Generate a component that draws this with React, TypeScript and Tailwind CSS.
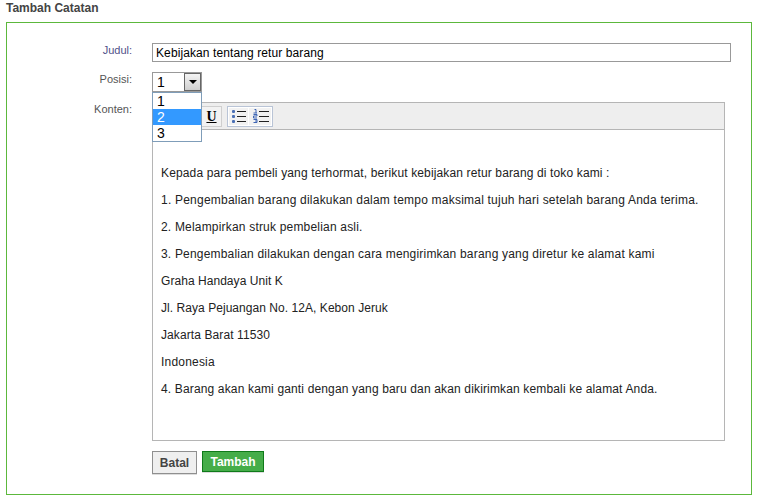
const sans = "font-['Liberation_Sans',Arial,sans-serif]";

// tracking per line, the reference's hinted advances don't scale evenly
const lines = [
  { text: "Kepada para pembeli yang terhormat, berikut kebijakan retur barang di toko kami :", cls: "tracking-[0.136px]" },
  { text: "1. Pengembalian barang dilakukan dalam tempo maksimal tujuh hari setelah barang Anda terima.", cls: "tracking-[0.217px]" },
  { text: "2. Melampirkan struk pembelian asli.", cls: "tracking-[0.19px]" },
  { text: "3. Pengembalian dilakukan dengan cara mengirimkan barang yang diretur ke alamat kami", cls: "tracking-[0.19px]" },
  { text: "Graha Handaya Unit K", cls: "tracking-[0.05px]" },
  { text: "Jl. Raya Pejuangan No. 12A, Kebon Jeruk", cls: "tracking-[0.05px]" },
  { text: "Jakarta Barat 11530", cls: "tracking-[0.1px]" },
  { text: "Indonesia", cls: "tracking-[0.2px]" },
  { text: "4. Barang akan kami ganti dengan yang baru dan akan dikirimkan kembali ke alamat Anda.", cls: "tracking-[0.15px]" },
];

function BulletIcon() {
  return (
    <svg width="14" height="14" viewBox="0 0 14 14">
      <g fill="#4a6fb5">
        <rect x="0" y="1" width="3" height="3" rx="1" />
        <rect x="0" y="6" width="3" height="3" rx="1" />
        <rect x="0" y="11" width="3" height="3" rx="1" />
      </g>
      <path d="M5 2.5h9M5 7.5h9M5 12.5h9" stroke="#222" strokeWidth="1" />
    </svg>
  );
}

function NumberIcon() {
  return (
    <svg width="17" height="14" viewBox="0 0 17 14">
      <path d="M1.5 0.5h1.5v3.5M0.5 4h3.5M0.5 5.5h3.5v1.5h-3.5v2h3.5M0.5 10.5h3.5v3h-3.5M2 12h2" stroke="#3f66b5" strokeWidth="1" fill="none" />
      <path d="M6 2.5h10M6 7.5h10M6 12.5h10" stroke="#222" strokeWidth="1" />
    </svg>
  );
}

export default function App() {
  return (
    <div className={`${sans} w-[760px] h-[502px] bg-white overflow-hidden relative text-[12px]`}>
      <div className="pl-[6px] pt-[1px] h-[22px] font-bold text-[#444] leading-[14px]">Tambah Catatan</div>
      <div className="ml-[6px] w-[746px] h-[473px] border border-[#5cb83c] pt-[20px]">
        <div className="flex">
          <div className="w-[125px] text-right text-[#50508a] text-[11px] leading-[14px]">Judul:</div>
          <div className="ml-[20px] w-[579px] h-[19px] border border-[#999] pl-[3px] text-[12px] leading-[19px] tracking-[0.1px] text-black">
            Kebijakan tentang retur barang
          </div>
        </div>
        <div className="flex mt-[10px] relative">
          <div className="w-[125px] text-right text-[#555] text-[11px] leading-[14px]">Posisi:</div>
          <div className="ml-[20px] w-[50px] h-[20px] border border-[#999] flex justify-between text-[14px] leading-[18px] pl-[4px] text-black">
            1
            <div className="w-[17px] h-[18px] bg-gradient-to-b from-[#f4f4f4] to-[#cfcfcf] border border-[#666] flex items-center justify-center">
              <div className="w-0 h-0 border-x-[4px] border-x-transparent border-t-[4px] border-t-black" />
            </div>
          </div>
          <div className="absolute left-[145px] top-[20px] w-[50px] h-[50px] bg-white border border-[#7f9db9] z-10 text-[14px] leading-[16px] text-black">
            <div className="pl-[4px]">1</div>
            <div className="pl-[4px] bg-[#3399ff] text-white">2</div>
            <div className="pl-[4px]">3</div>
          </div>
        </div>
        <div className="flex mt-[10px]">
          <div className="w-[125px] text-right text-[#555] text-[11px] leading-[14px]">Konten:</div>
          <div className="ml-[20px] w-[573px] h-[339px] border border-[#b5b5b5] flex flex-col">
            <div className="h-[27px] bg-[#eeeeee] border-b border-[#b5b5b5] flex items-center pl-[48px]">
              <div className="w-[21px] h-[21px] bg-[#f2f2f2] border border-[#cfcfcf] flex items-center justify-center font-['Liberation_Serif',serif] font-bold underline text-[14px] text-black">
                U
              </div>
              <div className="ml-[5px] w-[46px] h-[21px] border border-[#b9c4d6] bg-[#f2f2f2] flex items-center shadow-[inset_0_0_0_1px_#fff]">
                <div className="w-[21px] h-full flex items-center pl-[4px] border-r border-white">
                  <BulletIcon />
                </div>
                <div className="flex-1 h-full flex items-center pl-[4px]">
                  <NumberIcon />
                </div>
              </div>
            </div>
            <div className="flex-1 pl-[8px] pt-[36px] text-[12px] leading-[15px] text-[#222] flex flex-col gap-[12px]">
              {lines.map((l) => (
                <div key={l.text} className={l.cls}>{l.text}</div>
              ))}
            </div>
          </div>
        </div>
        <div className="flex items-start ml-[145px] mt-[10px] font-bold text-[12px]">
          <div className="w-[45px] h-[23px] border border-[#8f8f8f] bg-[#efefef] text-[#444] flex items-center justify-center shadow-[0_1px_0_#ddd]">Batal</div>
          <div className="ml-[5px] w-[62px] h-[21px] border border-[#0f7a1a] bg-[#45ad49] text-white flex items-center justify-center shadow-[0_1px_0_#ddd]">Tambah</div>
        </div>
      </div>
    </div>
  );
}
